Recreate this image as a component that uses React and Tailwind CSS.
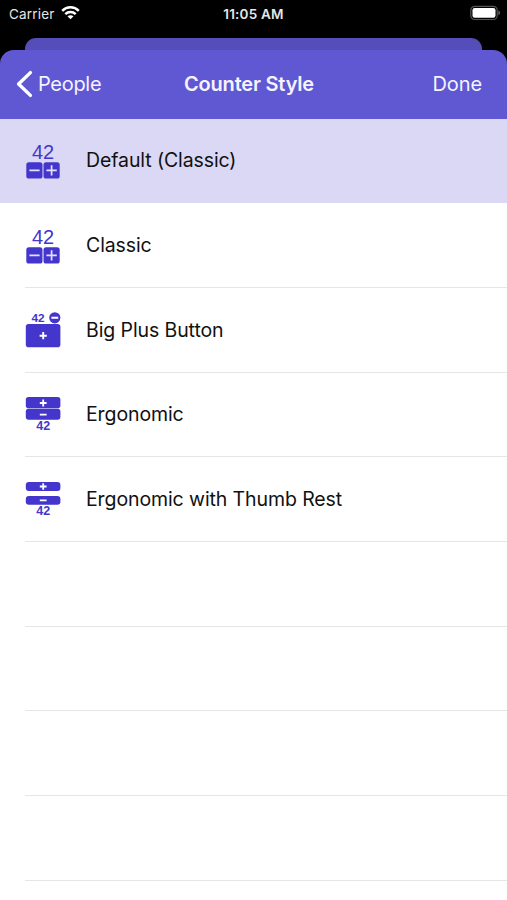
const GLYPH_FONT = '"Liberation Sans", Arial, sans-serif'

function ClassicIcon() {
  return (
    <svg width="36" height="36" viewBox="0 0 36 36" fill="#4436cc">
      <text x="18" y="16" fontSize="20" textAnchor="middle" fontFamily={GLYPH_FONT}>42</text>
      <rect x="1.3" y="19.2" width="16.2" height="16.4" rx="2.6" />
      <rect x="18.5" y="19.2" width="16.2" height="16.4" rx="2.6" />
      <path d="M4.4 27.4H14.6M21.4 27.4H31.8M26.6 22.2V32.6" stroke="#e4e2fb" strokeWidth="1.7" />
    </svg>
  )
}

function BigPlusIcon() {
  return (
    <svg width="36" height="36" viewBox="0 0 36 36" fill="#4436cc">
      <text x="13" y="10.2" fontSize="11.8" fontWeight="700" textAnchor="middle" fontFamily={GLYPH_FONT}>42</text>
      <circle cx="29.8" cy="5.8" r="5.6" />
      <rect x="0.8" y="12" width="34.6" height="23.2" rx="2.8" />
      <path d="M26.4 5.8H33.2M14.6 23.7H21.8M18.2 20.1V27.3" stroke="#fff" strokeWidth="1.9" />
    </svg>
  )
}

function ErgonomicIcon() {
  return (
    <svg width="36" height="36" viewBox="0 0 36 36" fill="#4436cc">
      <rect x="0.8" y="0" width="34.6" height="11.2" rx="2.8" />
      <rect x="0.8" y="11.8" width="34.6" height="11" rx="2.8" />
      <path d="M14.8 6H21.6M18.2 2.6V9.4M14.8 17.7H21.6" stroke="#fff" strokeWidth="1.8" />
      <text x="18.2" y="33.4" fontSize="12.5" fontWeight="700" textAnchor="middle" fontFamily={GLYPH_FONT}>42</text>
    </svg>
  )
}

function ThumbRestIcon() {
  return (
    <svg width="36" height="36" viewBox="0 0 36 36" fill="#4436cc">
      <rect x="0.8" y="0" width="34.6" height="9" rx="3" />
      <rect x="0.8" y="14" width="34.6" height="8.8" rx="3" />
      <path d="M14.8 4.5H21.6M18.2 1.3V7.7M14.8 18.3H21.6" stroke="#fff" strokeWidth="1.8" />
      <text x="18.2" y="33.4" fontSize="12.5" fontWeight="700" textAnchor="middle" fontFamily={GLYPH_FONT}>42</text>
    </svg>
  )
}

const STYLES = [
  { id: 'default', label: 'Default (Classic)', Icon: ClassicIcon, selected: true },
  { id: 'classic', label: 'Classic', Icon: ClassicIcon },
  { id: 'big-plus', label: 'Big Plus Button', Icon: BigPlusIcon },
  { id: 'ergonomic', label: 'Ergonomic', Icon: ErgonomicIcon },
  { id: 'thumb-rest', label: 'Ergonomic with Thumb Rest', Icon: ThumbRestIcon },
]

const EMPTY_ROWS = [0, 1, 2, 3]

function StatusBar() {
  return (
    <div className="grid h-[38px] shrink-0 grid-cols-3 px-[9px] pt-[4px] text-[13.5px] leading-[20px] text-[#e6e6e6]">
      <div className="flex items-start gap-[6px]">
        <span className="tracking-[0.2px]">Carrier</span>
        <svg className="mt-[1px]" width="19" height="16" viewBox="0 0 19 16" fill="none" stroke="#fff" strokeWidth="2.5">
          <path d="M1.2 5.8C5.8 1.2 13.2 1.2 17.8 5.8" />
          <path d="M4.3 9.2C7.2 6.4 11.8 6.4 14.7 9.2" />
          <path d="M9.5 14.3L6.5 11.3C8.2 9.8 10.8 9.8 12.5 11.3Z" fill="#fff" stroke="none" />
        </svg>
      </div>
      <span className="text-center font-semibold tracking-[0.2px]">11:05 AM</span>
      <svg className="ml-auto mr-[-3px] mt-[1px]" width="31" height="16" viewBox="0 0 31 16">
        <rect x="0.8" y="1.3" width="26.4" height="13.2" rx="4" fill="none" stroke="#555" strokeWidth="1.2" />
        <rect x="2.5" y="3" width="23" height="9.8" rx="2.2" fill="#fff" />
        <path d="M28.4 5.6C30.6 6.4 30.6 9.4 28.4 10.2Z" fill="#666" />
      </svg>
    </div>
  )
}

function NavBar() {
  return (
    <header className="grid h-[68.5px] shrink-0 grid-cols-[1fr_auto_1fr] items-center rounded-t-[14px] bg-[#6058d2] pl-[16px] pr-[25px] text-[20px] text-[#f4f3ff]">
      <button className="flex items-center gap-[5px]">
        <svg width="17" height="28" viewBox="0 0 17 28" fill="none" stroke="#fff" strokeWidth="3.4" strokeLinecap="round" strokeLinejoin="round">
          <path d="M14.4 2.6L2.6 14L14.4 25.4" />
        </svg>
        <span className="tracking-[-0.3px]">People</span>
      </button>
      <h1 className="font-semibold tracking-[-0.2px]">Counter Style</h1>
      <button className="justify-self-end tracking-[-0.1px]">Done</button>
    </header>
  )
}

function StyleRow({ label, Icon, selected }) {
  return (
    <li className={selected ? 'bg-[#dad8f4]' : 'bg-white'}>
      <div className="flex h-[84.7px] items-center pl-[25px]">
        <Icon />
        <div className={`ml-[1px] flex h-full flex-1 items-center pl-[24px] text-[19.5px] tracking-[-0.1px] text-[#111] ${selected ? '' : ''}`}>
          {label}
        </div>
      </div>
      {!selected && <div className="-mt-px ml-[25px] h-px bg-[#e6e6e6]" />}
    </li>
  )
}

export default function App() {
  return (
    <div className="flex h-[900px] w-[507px] flex-col overflow-hidden bg-black font-['Inter','Liberation_Sans',sans-serif]">
      <StatusBar />
      {/* top edge of the sheet behind this one */}
      <div className="mx-[25px] h-[12px] shrink-0 rounded-t-[11px] bg-[#544dba]" />
      <NavBar />
      <ul className="flex-1 bg-white">
        {STYLES.map(style => (
          <StyleRow key={style.id} {...style} />
        ))}
        {EMPTY_ROWS.map(row => (
          <li key={row} className="ml-[25px] h-[84.7px] border-b border-[#e6e6e6]" />
        ))}
      </ul>
    </div>
  )
}
